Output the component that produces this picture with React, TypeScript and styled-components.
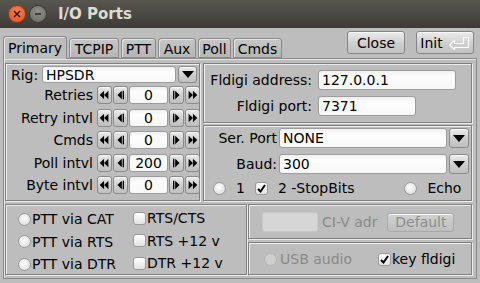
import styled, { createGlobalStyle } from "styled-components"

const Global = createGlobalStyle`
  html, body { margin: 0; padding: 0; background: #bdbdbd; }
  body { font-family: "DejaVu Sans", "Liberation Sans", sans-serif; font-size: 14px; color: #000; }
`

const Window = styled.div`
  width: 480px;
  height: 283px;
  overflow: hidden;
  background: #bdbdbd;
  display: flex;
  flex-direction: column;
`

const TitleBar = styled.div`
  height: 28px;
  flex: none;
  display: flex;
  align-items: center;
  padding-left: 8px;
  background: linear-gradient(#57564f, #3c3b37);
`

const WinDot = styled.div<{ $red?: boolean }>`
  width: 16px;
  height: 16px;
  border-radius: 50%;
  margin-right: 3px;
  display: flex;
  align-items: center;
  justify-content: center;
  background: ${(p) => (p.$red ? "radial-gradient(circle at 50% 35%, #f48158, #e2501d)" : "radial-gradient(circle at 50% 35%, #8e8d88, #6b6a65)")};
  border: 1px solid ${(p) => (p.$red ? "#9b3a17" : "#3a3935")};
`

const Title = styled.div`
  margin-left: 8px;
  color: #dfdbd2;
  font-weight: bold;
  font-size: 15px;
`

const TopRow = styled.div`
  height: 30px;
  flex: none;
  display: flex;
  padding-left: 3px;
  position: relative;
  z-index: 2;
`

const Tabs = styled.div`
  display: flex;
  align-items: flex-end;
  gap: 2px;
`

const Tab = styled.div<{ $active?: boolean; $w: number }>`
  width: ${(p) => p.$w}px;
  height: ${(p) => (p.$active ? 23 : 20)}px;
  box-sizing: border-box;
  margin-bottom: ${(p) => (p.$active ? -1 : 0)}px;
  border: 1px solid #8a8a8a;
  border-bottom: ${(p) => (p.$active ? "none" : "1px solid #8a8a8a")};
  border-radius: 3px 3px 0 0;
  background: ${(p) => (p.$active ? "#bdbdbd" : "linear-gradient(#c6c6c6, #b6b6b6)")};
  box-shadow: inset 1px 1px 0 #e4e4e4;
  display: flex;
  align-items: center;
  justify-content: center;
  padding-top: ${(p) => (p.$active ? 0 : 1)}px;
`

const TopButtons = styled.div`
  margin-left: auto;
  margin-right: 6px;
  padding-top: 3px;
  display: flex;
  gap: 11px;
`

const Button = styled.div<{ $w: number; $h?: number; $disabled?: boolean }>`
  width: ${(p) => p.$w}px;
  height: ${(p) => p.$h ?? 23}px;
  box-sizing: border-box;
  border: 1px solid ${(p) => (p.$disabled ? "#a8a8a8" : "#858585")};
  border-radius: 3px;
  background: ${(p) => (p.$disabled ? "linear-gradient(#d2d2d2, #bebebe)" : "linear-gradient(#ececec, #cfcfcf 55%, #c2c2c2)")};
  box-shadow: inset 0 1px 0 #fafafa;
  display: flex;
  align-items: center;
  justify-content: center;
  gap: 5px;
  color: ${(p) => (p.$disabled ? "#8c8c8c" : "#000")};
`

const Panel = styled.div`
  margin: 0 3px;
  height: 221px;
  box-sizing: border-box;
  border: 1px solid #8a8a8a;
  box-shadow: inset 1px 1px 0 #e4e4e4;
  padding: 4px 0 0 1px;
  display: flex;
  flex-direction: column;
  gap: 3px;
`

const Row = styled.div<{ $gap?: number }>`
  display: flex;
  gap: ${(p) => p.$gap ?? 0}px;
`

const Column = styled.div<{ $gap?: number }>`
  display: flex;
  flex-direction: column;
  gap: ${(p) => p.$gap ?? 0}px;
`

const Group = styled.div<{ $w: number; $h: number; $pad?: string }>`
  width: ${(p) => p.$w}px;
  height: ${(p) => p.$h}px;
  box-sizing: border-box;
  border: 1px solid #808080;
  box-shadow: inset 1px 1px 0 #ececec, 1px 1px 0 #ececec;
  padding: ${(p) => p.$pad ?? "0"};
  display: flex;
  flex-direction: column;
`

const FieldRow = styled.div<{ $gap?: number; $mt?: number }>`
  display: flex;
  align-items: center;
  gap: ${(p) => p.$gap ?? 2}px;
  margin-top: ${(p) => p.$mt ?? 0}px;
`

const Label = styled.div<{ $w?: number; $right?: boolean; $grey?: boolean }>`
  width: ${(p) => (p.$w ? `${p.$w}px` : "auto")};
  flex: none;
  text-align: ${(p) => (p.$right ? "right" : "left")};
  white-space: nowrap;
  color: ${(p) => (p.$grey ? "#8a8a8a" : "#000")};
`

const Input = styled.div<{ $w: number; $h?: number; $center?: boolean; $disabled?: boolean }>`
  width: ${(p) => p.$w}px;
  height: ${(p) => p.$h ?? 20}px;
  box-sizing: border-box;
  border: 1px solid ${(p) => (p.$disabled ? "#c8c8c8" : "#9c9c9c")};
  border-radius: 3px;
  background: ${(p) => (p.$disabled ? "#d6d6d6" : "linear-gradient(#f0f0f0, #fdfdfd 30%, #f7f7f7)")};
  display: flex;
  align-items: center;
  justify-content: ${(p) => (p.$center ? "center" : "flex-start")};
  padding-left: ${(p) => (p.$center ? 0 : 3)}px;
  white-space: nowrap;
`

const SmallBtn = styled.div<{ $w: number; $h: number }>`
  width: ${(p) => p.$w}px;
  height: ${(p) => p.$h}px;
  box-sizing: border-box;
  border: 1px solid #8a8a8a;
  border-radius: 3px;
  background: linear-gradient(#ececec, #cdcdcd 55%, #bfbfbf);
  box-shadow: inset 0 1px 0 #fafafa;
  display: flex;
  align-items: center;
  justify-content: center;
`

const Round = styled.div<{ $disabled?: boolean }>`
  width: 13px;
  height: 13px;
  flex: none;
  box-sizing: border-box;
  border-radius: 50%;
  border: 1px solid ${(p) => (p.$disabled ? "#b4b4b4" : "#9a9a9a")};
  background: ${(p) => (p.$disabled ? "#cfcfcf" : "radial-gradient(circle at 45% 40%, #ffffff, #e6e6e6 60%, #d0d0d0)")};
`

const Box = styled.div`
  width: 13px;
  height: 13px;
  flex: none;
  box-sizing: border-box;
  border-radius: 3px;
  border: 1px solid #9a9a9a;
  background: linear-gradient(#ffffff, #e2e2e2);
  display: flex;
  align-items: center;
  justify-content: center;
`

const OptGrid = styled.div`
  display: grid;
  grid-template-columns: 115px auto;
  grid-auto-rows: 22.5px;
  padding: 2px 0 0 12px;
`

const Opt = styled.div<{ $dy?: number }>`
  display: flex;
  align-items: center;
  gap: 1px;
  transform: translateY(${(p) => p.$dy ?? 0}px);
`

const Arrow = ({ dir, double }: { dir: "l" | "r"; double?: boolean }) => {
  const pts = double
    ? ["2,9 7,4 7,14", "7,9 12,4 12,14"]
    : ["4,9 9,4 9,14"]
  return (
    <svg width="15" height="18" viewBox="0 0 15 18" style={{ transform: dir === "r" ? "scaleX(-1)" : undefined }}>
      {pts.map((p) => (
        <polygon key={p} points={p} fill="#000" />
      ))}
      {!double && <rect x="10" y="4" width="1.5" height="10" fill="#000" />}
    </svg>
  )
}

const Down = () => (
  <svg width="12" height="7" viewBox="0 0 12 7">
    <polygon points="0,0 12,0 6,7" fill="#000" />
  </svg>
)

const Check = () => (
  <svg width="11" height="11" viewBox="0 0 11 11">
    <path d="M2 6 L4.5 8.5 L9 2" fill="none" stroke="#000" strokeWidth="2" />
  </svg>
)

const EnterIcon = () => (
  <svg width="22" height="14" viewBox="0 0 22 14">
    <path
      d="M1.5 9 L6.5 4.5 V7.5 H15.5 V1.5 H20.5 V11.5 H6.5 V13.5 Z"
      fill="none"
      stroke="#fbfbfb"
      strokeWidth="1.2"
      strokeLinejoin="round"
    />
  </svg>
)

const Counter = ({ label, value }: { label: string; value: string }) => (
  <FieldRow $gap={4}>
    <Label $w={87} $right>
      {label}
    </Label>
    <Row $gap={1}>
      <SmallBtn $w={15} $h={18}>
        <Arrow dir="l" double />
      </SmallBtn>
      <SmallBtn $w={15} $h={18}>
        <Arrow dir="l" />
      </SmallBtn>
      <Input $w={39} $h={18} $center>
        {value}
      </Input>
      <SmallBtn $w={15} $h={18}>
        <Arrow dir="r" />
      </SmallBtn>
      <SmallBtn $w={15} $h={18}>
        <Arrow dir="r" double />
      </SmallBtn>
    </Row>
  </FieldRow>
)

const tabs: [string, number][] = [
  ["Primary", 64],
  ["TCPIP", 50],
  ["PTT", 35],
  ["Aux", 38],
  ["Poll", 33],
  ["Cmds", 49],
]

const counters: [string, string][] = [
  ["Retries", "0"],
  ["Retry intvl", "0"],
  ["Cmds", "0"],
  ["Poll intvl", "200"],
  ["Byte intvl", "0"],
]

export default function App() {
  return (
    <Window>
      <Global />
      <TitleBar>
        <WinDot $red>
          <svg width="8" height="8" viewBox="0 0 8 8">
            <path d="M1 1 L7 7 M7 1 L1 7" stroke="#3d1a0c" strokeWidth="1.6" />
          </svg>
        </WinDot>
        <WinDot>
          <svg width="8" height="8" viewBox="0 0 8 8">
            <path d="M1 4 H7" stroke="#2e2d2a" strokeWidth="1.6" />
          </svg>
        </WinDot>
        <Title>I/O Ports</Title>
      </TitleBar>

      <TopRow>
        <Tabs>
          {tabs.map(([t, w], i) => (
            <Tab key={t} $w={w} $active={i === 0}>
              {t}
            </Tab>
          ))}
        </Tabs>
        <TopButtons>
          <Button $w={58}>Close</Button>
          <Button $w={58}>
            Init
            <EnterIcon />
          </Button>
        </TopButtons>
      </TopRow>

      <Panel>
        <Row $gap={3}>
          <Group $w={195} $h={138} $pad="2px 0 0 5px">
            <FieldRow $gap={0}>
              <Label $w={31}>Rig:</Label>
              <Input $w={134} $h={17}>
                HPSDR
              </Input>
              <SmallBtn $w={19} $h={17} style={{ marginLeft: 2 }}>
                <Down />
              </SmallBtn>
            </FieldRow>
            <Column $gap={4.5} style={{ marginTop: 3, marginLeft: -5 }}>
              {counters.map(([l, v]) => (
                <Counter key={l} label={l} value={v} />
              ))}
            </Column>
          </Group>

          <Column $gap={2}>
            <Group $w={269} $h={60} $pad="6px 0 0 0">
              <FieldRow $gap={6}>
                <Label $w={108} $right>
                  Fldigi address:
                </Label>
                <Input $w={138}>127.0.0.1</Input>
              </FieldRow>
              <FieldRow $gap={6} $mt={6}>
                <Label $w={108} $right>
                  Fldigi port:
                </Label>
                <Input $w={98}>7371</Input>
              </FieldRow>
            </Group>
            <Group $w={269} $h={76} $pad="2px 0 0 0">
              <FieldRow>
                <Label $w={73} $right>
                  Ser. Port
                </Label>
                <Input $w={168}>NONE</Input>
                <SmallBtn $w={20} $h={20}>
                  <Down />
                </SmallBtn>
              </FieldRow>
              <FieldRow $mt={6}>
                <Label $w={73} $right>
                  Baud:
                </Label>
                <Input $w={168}>300</Input>
                <SmallBtn $w={20} $h={20}>
                  <Down />
                </SmallBtn>
              </FieldRow>
              <FieldRow $gap={0} $mt={6} style={{ paddingLeft: 9 }}>
                <Round />
                <Label style={{ marginLeft: 10 }}>1</Label>
                <Box style={{ marginLeft: 10 }}>
                  <Check />
                </Box>
                <Label style={{ marginLeft: 10 }}>2 -StopBits</Label>
                <Round style={{ marginLeft: 50 }} />
                <Label style={{ marginLeft: 10 }}>Echo</Label>
              </FieldRow>
            </Group>
          </Column>
        </Row>

        <Row $gap={1}>
          <Group $w={242} $h={71}>
            <OptGrid>
              <Opt $dy={1}>
                <Round />
                <Label>PTT via CAT</Label>
              </Opt>
              <Opt>
                <Box />
                <Label>RTS/CTS</Label>
              </Opt>
              <Opt $dy={1}>
                <Round />
                <Label>PTT via RTS</Label>
              </Opt>
              <Opt>
                <Box />
                <Label>RTS +12 v</Label>
              </Opt>
              <Opt $dy={1}>
                <Round />
                <Label>PTT via DTR</Label>
              </Opt>
              <Opt>
                <Box />
                <Label>DTR +12 v</Label>
              </Opt>
            </OptGrid>
          </Group>
          <Column $gap={3}>
            <Group $w={224} $h={35} $pad="7px 0 0 13px">
              <FieldRow $gap={4}>
                <Input $w={56} $disabled />
                <Label $grey>CI-V adr</Label>
                <Button $w={67} $h={19} $disabled style={{ marginLeft: 6 }}>
                  Default
                </Button>
              </FieldRow>
            </Group>
            <Group $w={224} $h={33} $pad="8px 0 0 15px">
              <FieldRow $gap={0}>
                <Round $disabled />
                <Label $grey style={{ marginLeft: 3 }}>
                  USB audio
                </Label>
                <Box style={{ marginLeft: 26 }}>
                  <Check />
                </Box>
                <Label style={{ marginLeft: 1 }}>key fldigi</Label>
              </FieldRow>
            </Group>
          </Column>
        </Row>
      </Panel>
    </Window>
  )
}
